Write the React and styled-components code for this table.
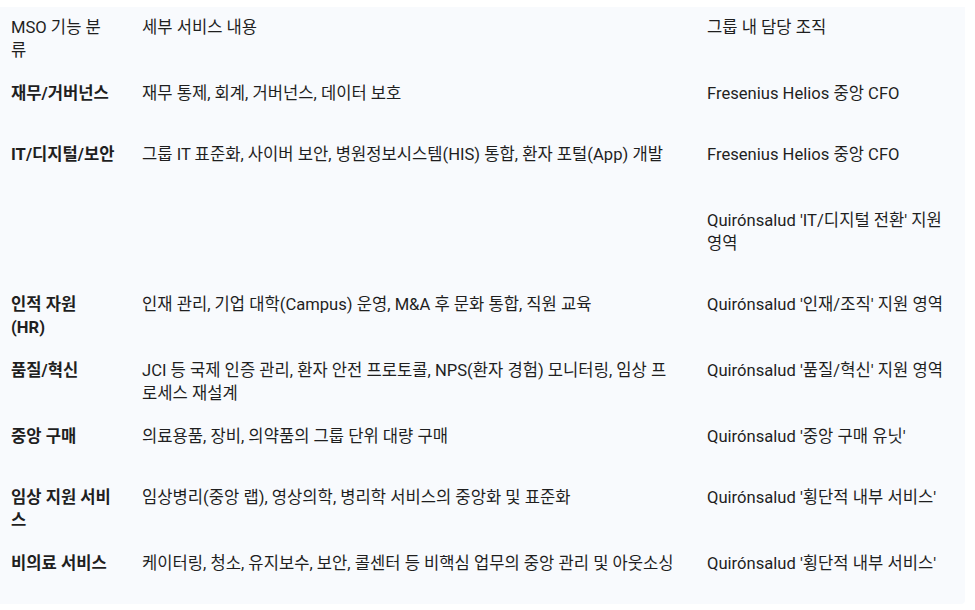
import React from 'react';
import styled, { createGlobalStyle } from 'styled-components';

const GlobalStyle = createGlobalStyle`
  html, body {
    margin: 0;
    padding: 0;
    background: #ffffff;
  }
  body {
    font-family: Roboto, "Noto Sans CJK KR", sans-serif;
    color: #1f1f1f;
  }
`;

const Page = styled.div`
  width: 975px;
  height: 610px;
  padding-top: 7px;
  box-sizing: border-box;
  background: #ffffff;
`;

const Panel = styled.div`
  width: 965px;
  height: 597px;
  background: #f8fafd;
  border-radius: 0 0 4px 0;
  padding-left: 11px;
  box-sizing: border-box;
`;

const Row = styled.div`
  display: grid;
  grid-template-columns: 131px 565px 1fr;
  height: ${(p) => p.$h}px;
  padding-top: 9px;
  box-sizing: border-box;
  font-size: 16.6px;
  line-height: 23px;
`;

const Cell = styled.div`
  padding-right: ${(p) => p.$pr}px;
  font-weight: ${(p) => (p.$bold ? 700 : 400)};
  white-space: pre-line;
`;

const rows = [
  { h: 66, head: true, a: 'MSO 기능 분류', b: '세부 서비스 내용', c: '그룹 내 담당 조직' },
  { h: 61, a: '재무/거버넌스', b: '재무 통제, 회계, 거버넌스, 데이터 보호', c: 'Fresenius Helios 중앙 CFO' },
  { h: 66, a: 'IT/디지털/보안', b: '그룹 IT 표준화, 사이버 보안, 병원정보시스템(HIS) 통합, 환자 포털(App) 개발', c: 'Fresenius Helios 중앙 CFO' },
  { h: 84, a: '', b: '', c: "Quirónsalud 'IT/디지털 전환' 지원 영역" },
  { h: 66, a: '인적 자원\n(HR)', b: '인재 관리, 기업 대학(Campus) 운영, M&A 후 문화 통합, 직원 교육', c: "Quirónsalud '인재/조직' 지원 영역" },
  { h: 66, a: '품질/혁신', b: 'JCI 등 국제 인증 관리, 환자 안전 프로토콜, NPS(환자 경험) 모니터링, 임상 프로세스 재설계', c: "Quirónsalud '품질/혁신' 지원 영역" },
  { h: 61, a: '중앙 구매', b: '의료용품, 장비, 의약품의 그룹 단위 대량 구매', c: "Quirónsalud '중앙 구매 유닛'" },
  { h: 66, a: '임상 지원 서비스', b: '임상병리(중앙 랩), 영상의학, 병리학 서비스의 중앙화 및 표준화', c: "Quirónsalud '횡단적 내부 서비스'" },
  { h: 61, a: '비의료 서비스', b: '케이터링, 청소, 유지보수, 보안, 콜센터 등 비핵심 업무의 중앙 관리 및 아웃소싱', c: "Quirónsalud '횡단적 내부 서비스'" },
];

export default function App() {
  return (
    <Page>
      <GlobalStyle />
      <Panel>
        {rows.map((r, i) => (
          <Row key={i} $h={r.h}>
            <Cell $bold={!r.head} $pr={r.head ? 34 : 22}>{r.a}</Cell>
            <Cell $pr={30}>{r.b}</Cell>
            <Cell $pr={12}>{r.c}</Cell>
          </Row>
        ))}
      </Panel>
    </Page>
  );
}
